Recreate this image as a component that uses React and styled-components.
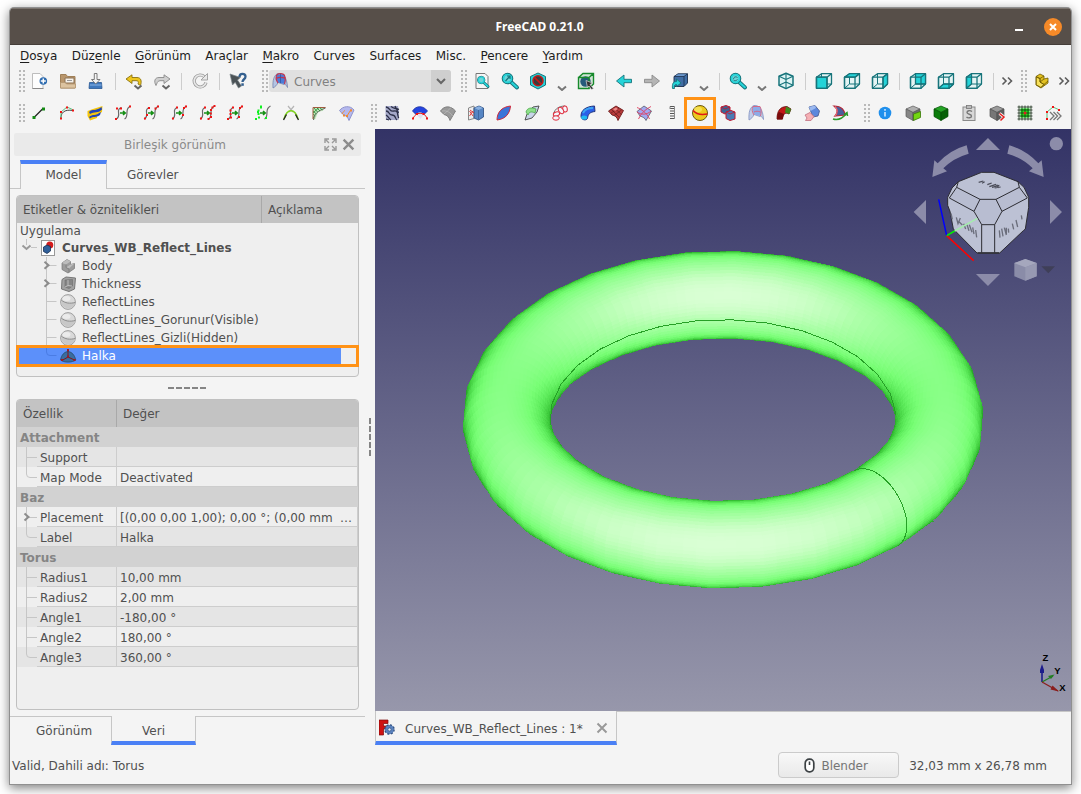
import React from 'react';
import styled, { createGlobalStyle } from 'styled-components';

const Global = createGlobalStyle`
  * { box-sizing: border-box; }
  html, body { margin: 0; padding: 0; background: #fff; }
  body { width: 1081px; height: 794px; overflow: hidden; font-family: "DejaVu Sans", sans-serif; font-size: 12px; color: #505050; }
  #root { width: 1081px; height: 794px; }
`;

/* ---------- window frame ---------- */
const Desktop = styled.div`
  width: 1081px; height: 794px; padding: 8px 10px 10px; overflow: hidden;
  display: flex; background: #fff;
`;
const Window = styled.div`
  width: 1061px; height: 776px; display: flex; flex-direction: column;
  background: #f4f4f4; border-radius: 4px 4px 0 0; overflow: hidden; white-space: nowrap;
  box-shadow: 0 0 0 1px #909090, 0 3px 11px 1px rgba(0,0,0,0.5);
`;
const TitleBar = styled.div`
  height: 37px; flex: none; display: flex; align-items: center; justify-content: flex-end;
  padding-right: 9px; gap: 21px; background: #574f49; border-top: 1px solid #7c756f; border-bottom: 1px solid #453e39;
`;
const Title = styled.div`
  flex: 1; text-align: center; padding-left: 75px; color: #fff;
  font: bold 12px "Noto Sans", sans-serif;
`;
const MinButton = styled.div`width: 8px; height: 2px; background: #fff; margin-top: 6px;`;
const CloseButton = styled.div`
  width: 18px; height: 18px; border-radius: 50%; background: #f68a28; display: flex; align-items: center; justify-content: center;
`;
const MenuBar = styled.div`
  height: 21px; flex: none; display: flex; gap: 14.35px; padding: 0 10px; line-height: 23px; color: #1c1c1c;
  u { text-underline-offset: 2px; text-decoration-thickness: 1px; }
`;

/* ---------- toolbars ---------- */
const Toolbar = styled.div`height: ${p => p.$h}px; flex: none; display: flex; align-items: center; padding-bottom: ${p => p.$pb || 0}px;`;
const Slot = styled.div`
  width: ${p => p.$w || 28}px; height: 30px; flex: none; display: flex; align-items: center; justify-content: center; position: relative;
  svg { display: block; }
`;
const Grip = styled.div`
  width: ${p => p.$w}px; flex: none; display: flex; justify-content: flex-end; padding-right: ${p => p.$pr || 2}px;
  &::after {
    content: ""; width: 8px; height: ${p => p.$h}px; position: relative; left: 1px;
    background: linear-gradient(90deg, #f4f4f4 2px, transparent 2px) 0 0 / 4px 4px, linear-gradient(#b9b9b9 2px, transparent 2px) 0 0 / 4px 4px;
  }
`;
const Divider = styled.div`width: 10px; flex: none; display: flex; justify-content: center; &::after { content: ""; width: 1px; height: 17px; background: #cdcdcd; }`;
const Highlight = styled.div`
  position: absolute; left: -2px; top: -1px; width: 32px; height: 32px; border: 3px solid #ff9216;
`;
const Combo = styled.div`
  width: 182px; height: 22px; flex: none; display: flex; align-items: center; background: #e0e0e0; border-radius: 3px; overflow: hidden; color: #808080;
  padding-left: 1px;
  span { flex: 1; padding: 1px 0 0 4px; }
`;
const ComboArrow = styled.div`width: 20px; height: 22px; background: #cfcfcf; display: flex; align-items: center; justify-content: center;`;

/* ---------- main area ---------- */
const Main = styled.div`height: 616px; flex: none; display: flex;`;
const Side = styled.div`width: 355px; flex: none; display: flex; flex-direction: column;`;
const DockTitle = styled.div`
  margin: 4px 4px 0 4px; height: 23px; display: flex; align-items: center; background: #eaeaea; color: #8a8a8a; border-radius: 2px; padding-right: 6px; gap: 5px;
  span { flex: 1; text-align: center; padding-left: 17px; }
`;
const TopTabs = styled.div`height: 29px; margin-top: 4px; display: flex;`;
const Rule = styled.div`width: ${p => p.$w}px; flex: ${p => (p.$grow ? 1 : 'none')}; border-${p => p.$side}: 1px solid #c6c6c6;`;
const Tab = styled.div`
  width: ${p => p.$w}px; flex: none; text-align: center;
  ${p => p.$top && `border: 1px solid #c6c6c6; border-bottom: 0; border-top: 4px solid #4a80f5; line-height: 22px;`}
  ${p => p.$bottom && `border: 1px solid #c6c6c6; border-top: 0; border-bottom: 4px solid #4a80f5; line-height: 31px;`}
`;
const IdleTab = styled.div`
  width: ${p => p.$w}px; flex: none; padding-left: ${p => p.$pad}px; line-height: ${p => p.$lh}px; border-${p => p.$side}: 1px solid #c6c6c6;
`;
const Panel = styled.div`
  width: 343px; height: ${p => p.$h}px; margin: ${p => p.$mt}px 0 0 6px; flex: none; border: 1px solid #c0c0c0; border-radius: 4px; background: #efefef;
`;
const Header = styled.div`height: 27px; display: flex; background: #c3c3c3; line-height: 29px; border-radius: 3px 3px 0 0;`;
const HeadCell = styled.div`width: ${p => p.$w}px; height: 27px; padding-left: 6px; flex: none; ${p => p.$line && 'border-right: 1px solid #a9a9a9;'}`;
const TreeCaption = styled.div`height: 16px; line-height: 17px; padding-left: 3px;`;
const TreeRow = styled.div`
  height: 18px; display: flex; align-items: center; position: relative; line-height: 17px;
  width: ${p => (p.$selected ? 324 : 341)}px;
  background: ${p => (p.$selected ? '#5c90fa' : 'transparent')};
  color: ${p => (p.$selected ? '#fff' : '#505050')};
  font-weight: ${p => (p.$bold ? 'bold' : 'normal')};
  svg { display: block; flex: none; }
`;
const Label = styled.span`padding-left: ${p => p.$pad}px;`;
const SelectionFrame = styled.div`
  position: absolute; left: -1px; top: -2px; width: 343px; height: 22px; border: 3px solid #ff9216;
`;
const HSplit = styled.div`
  height: 22px; display: flex; gap: 2px; justify-content: center; align-items: center; padding-right: 1px;
  i { width: 6px; height: 2px; background: #858585; }
`;
const VSplit = styled.div`
  width: 10px; flex: none; display: flex; flex-direction: column; gap: 2px; align-items: center; padding-top: 289px;
  i { width: 2px; height: 6px; background: #858585; flex: none; }
`;
const Group = styled.div`height: 20px; line-height: 23px; background: #d2d2d2; color: #858585; font-weight: bold; padding-left: 3px;`;
const Prop = styled.div`height: 20px; display: flex; line-height: 23px; background: ${p => (p.$alt ? '#efefef' : '#e5e5e5')}; svg { flex: none; }`;
const PropName = styled.div`width: 80px; height: 20px; flex: none; padding-left: 3px; border-bottom: 1px solid #cdcdcd; border-right: 1px solid #cdcdcd;`;
const PropValue = styled.div`flex: 1; height: 20px; display: flex; justify-content: space-between; padding: 0 5px 0 3px; border-bottom: 1px solid #cdcdcd; border-right: 1px solid #cdcdcd;`;
const BottomTabs = styled.div`height: 29px; margin-top: 6px; display: flex;`;

const Right = styled.div`flex: 1; display: flex; flex-direction: column; min-width: 0;`;
const Viewport = styled.div`
  height: 582px; flex: none; position: relative; overflow: hidden; background: linear-gradient(#333366, #9797ab);
`;
const Scene = styled.svg`display: block; width: 696px; height: 582px;`;
const DocTabs = styled.div`height: 34px; display: flex;`;
const DocTab = styled.div`
  width: 242px; flex: none; display: flex; align-items: center; padding: 0 8px 0 3px; border: 1px solid #c6c6c6; border-top: 0; border-bottom: 4px solid #4a80f5;
  span { padding-left: 10px; flex: 1; padding-top: 6px; }
  svg { margin-top: 3px; }
`;
const StatusBar = styled.div`flex: 1; display: flex; align-items: center; padding: 1px 24px 0 2px; line-height: 16px;`;
const StatusText = styled.div`flex: 1; padding-top: 1px;`;
const SizeText = styled.div`padding-top: 1px;`;
const NavButton = styled.div`
  width: 121px; height: 26px; display: flex; align-items: center; justify-content: center; gap: 6px; color: #757575; padding-right: 5px;
  border: 1px solid #cbcbcb; border-radius: 4px; background: linear-gradient(#f8f8f8, #e9e9e9); margin-right: 10px;
  span { padding-top: 1px; }
`;

/* ---------- icons (20 x 20 grid) ---------- */
const T = '#17747b', C = '#25d3d8';
const Cube = ({ face }) => (
  <g stroke={T} strokeLinejoin="round" strokeWidth="1.3" fill="none">
    <path d="M2.500 6.200L7.500 2.700H17.500V13L13 17.300H2.500Z" fill="#e4f4f4" />
    {face === 'back' && <path d="M7.500 2.700H17.500V13H7.500Z" fill={C} />}
    {face === 'bottom' && <path d="M2.500 17.300L7.500 13H17.500L13 17.300Z" fill={C} />}
    {face === 'left' && <path d="M2.500 6.200L7.500 2.700V13L2.500 17.300Z" fill={C} />}
    <path d="M7.500 2.700V13H17.500M7.500 13L2.500 17.300" strokeWidth="1" />
    {face === 'front' && <path d="M2.500 6.200H13V17.300H2.500Z" fill={C} />}
    {face === 'top' && <path d="M2.500 6.200L7.500 2.700H17.500L13 6.200Z" fill={C} />}
    {face === 'right' && <path d="M13 6.200L17.500 2.700V13L13 17.300Z" fill={C} />}
    <path d="M2.500 6.200H13V17.300H2.500ZM13 6.200L17.500 2.700" />
  </g>
);
const Solid = ({ top, left, right, stroke }) => (
  <g stroke={stroke} strokeLinejoin="round" strokeWidth=".7">
    <path d="M10 3L17 6L10 9.500L3 6Z" fill={top} />
    <path d="M3 6L10 9.500V17.500L3 13.500Z" fill={left} />
    <path d="M17 6L10 9.500V17.500L17 13.500Z" fill={right} />
  </g>
);
const Lens = ({ s = 1, x = 0, y = 0, children }) => (
  <g transform={`translate(${x} ${y}) scale(${s})`}>
    <path d="M11 11L17 16.500" stroke={T} strokeWidth="4" strokeLinecap="round" />
    <path d="M11 11L16.800 16.300" stroke={C} strokeWidth="2.200" strokeLinecap="round" />
    <circle cx="7.500" cy="7.500" r="5.200" fill="#6fd4d8" stroke={T} strokeWidth="1.200" />
    <circle cx="7.500" cy="7.500" r="3.900" fill="none" stroke={C} strokeWidth="1.800" />
    {children}
  </g>
);
const Link = ({ a, b }) => (
  <g fill="none">
    <path d="M3 16C6 15 6 12 5.500 9S7 5 8.500 4.500" stroke={a} strokeWidth="1.200" />
    <path d="M11.500 16C14 15 14 12 14 9S15.500 4 17.500 3" stroke={b} strokeWidth="1.200" />
    <path d="M7 10H12M10 8.200L12.200 10L10 11.800" stroke="#169016" strokeWidth="1.600" />
  </g>
);
const Dots = ({ pts, c = '#f01414' }) => <>{pts.map(([x, y], i) => <rect key={i} x={x - 1} y={y - 1} width="2" height="2" fill={c} />)}</>;
const gray = '#6a6a6a';
const L1 = [[3, 16], [6, 14.5], [5.5, 11], [5.5, 7.5], [8, 4.500]];
const R1 = [[11.5, 16], [14, 14], [13.800, 10.500], [14, 7], [15.500, 4.500], [17.500, 3]];

const ICONS = {
  fresh: <><path d="M2.500 2.500H10L13 5.500V17.500H2.500Z" fill="#fdfdfd" stroke="#b5b5b5" strokeWidth=".9" /><path d="M2.500 17.500H13.500" stroke="#888" /><circle cx="13.300" cy="10" r="3.800" fill="#2e6cb0" /><path d="M13.300 7.500V12.500M10.800 10H15.800" stroke="#fff" strokeWidth="1.500" /></>,
  open: <><path d="M2.500 3.500H8L9.500 5.500H17V17H2.500Z" fill="#b9966c" stroke="#a08058" /><path d="M7 7H16V12H7Z" fill="#f6f2ec" stroke="#8c7355" /><path d="M9 9.500H14" stroke="#999" /><path d="M2.500 11.500H7L8.500 13H17.500V17H2.500Z" fill="#dcc3a0" stroke="#b39670" strokeWidth=".8" /></>,
  save: <><path d="M3.500 11.500H15.500L16 17.500H3Z" fill="#3f78bd" stroke="#2a5893" strokeWidth=".8" /><path d="M4 14H15.500" stroke="#8cb4e4" /><path d="M8.300 2.500H11V8.500H14L9.700 13L5.500 8.500H8.300Z" fill="#f5f5f5" stroke="#6d6d6d" strokeWidth=".9" /></>,
  undo: <><path d="M2 8L8 3.800V6.500H13C17 6.500 18 10 16.500 14.500L14 13C15 10.500 14 9.700 12 9.700H8V12.500Z" fill="#edc51c" stroke="#8a7210" strokeWidth=".9" /><path d="M10.500 14.500L14 17.500L17.500 14.500" stroke="#666" strokeWidth="2" fill="none" /></>,
  redo: <><path d="M18 8L12 3.800V6.500H7C3 6.500 1.500 10 4 14.500C5 13 5 9.700 8 9.700H12V12.500Z" fill="#d0d0d0" stroke="#8a8a8a" strokeWidth=".9" /><path d="M10.500 14.500L14 17.500L17.500 14.500" stroke="#666" strokeWidth="2" fill="none" /></>,
  refresh: <><path d="M14.500 5.800A6 6 0 1 0 16 11.500" fill="none" stroke="#9c9c9c" strokeWidth="3.200" /><path d="M14.500 5.800A6 6 0 1 0 16 11.500" fill="none" stroke="#e8e8e8" strokeWidth="1.600" /><path d="M17.500 2.500V9H11Z" fill="#e8e8e8" stroke="#9c9c9c" strokeWidth=".9" /></>,
  help: <><path d="M2 3L12.500 6.500L9.500 9L13.500 15L10.500 17L7.200 11.300L4.500 14Z" fill="#4b5357" stroke="#7b8589" strokeWidth=".7" /><path d="M11.500 6C11.500 1.800 17.500 2 17.500 5.500C17.500 8.500 14.500 8 14.500 11" fill="none" stroke="#34608f" strokeWidth="2.300" /><rect x="13.300" y="12.300" width="2.500" height="2.500" fill="#34608f" /></>,
  wb: <><path d="M3 17C2.500 9 4 4 8 2.500C13 2 17 6 17.500 16.500C16 13.500 15 13 14 13.500L8 11.500C7 14 5 16 3 17Z" fill="#b4c4e4" stroke="#7383ac" strokeWidth=".8" /><path d="M7 3.500H14C15.500 6 15.500 10 14.500 13L8 11.500C6.500 9 6 6 7 3.500Z" fill="#4a7cd8" /><path d="M7 3.500C5.500 6 6 9 8 12M14 3.500C15.500 6 15.500 10 14.500 13M6 7.500C9 6 12 6 15.500 7.500M7 3.500C9 2.500 12 2.500 14 3.500" stroke="#c03550" strokeWidth="1.200" fill="none" /><path d="M10.500 3V12" stroke="#2f4f98" strokeWidth=".7" fill="none" /></>,
  fitAll: <><path d="M4 2.500H13L16 5.500V17.500H4Z" fill="#f6f6f6" stroke="#777" /><Lens s=".72" x="3.800" y="3.600" /></>,
  fitSel: <Lens><path d="M5.500 10L10 5M7 5H10V8" stroke={T} fill="none" strokeWidth="1.200" /></Lens>,
  noDraw: <><path d="M10 2L17.500 5.500V14L10 18L2.500 14V5.500Z" fill={C} stroke={T} /><circle cx="10" cy="9.800" r="5" fill="#3b3b3b" stroke="#c41818" strokeWidth="1.500" /><path d="M6.400 6.400L13.600 13.300" stroke="#c41818" strokeWidth="1.700" /></>,
  boxSel: <><path d="M2.500 6.500L7 2.500H17.500V13L13 17.500H2.500Z" fill="#cfe4d4" /><circle cx="9.500" cy="10.500" r="5.200" fill="#255a7b" /><path d="M2.500 6.500H13V17.500H2.500ZM2.500 6.500L7 2.500H17.500V13L13 17.500M13 6.500L17.500 2.500" fill="none" stroke="#178a2c" strokeWidth="1.400" /><path d="M10 9.500L16.500 12L14 13.500L17.500 17.500L15.500 18.500L13 15L11.500 16.500Z" fill="#333" stroke="#ddd" strokeWidth=".7" /></>,
  prev: <path d="M2.500 10L10 4V8.300H17.500V11.700H10V16Z" fill={C} stroke={T} strokeWidth=".9" />,
  next: <path d="M17.500 10L10 4V8.300H2.500V11.700H10V16Z" fill="#b5b5b5" stroke="#8a8a8a" strokeWidth=".9" />,
  linkGo: <><path d="M4 5.500L8 2.800H17.500V12L14 15.500H4Z" fill="#3f6da4" stroke="#1b2f4c" strokeWidth=".9" /><path d="M4.500 5.500L8 3.300H17L13.500 5.500Z" fill="#6d98cc" /><path d="M4 5.500H14V15M14 5.500L17.500 2.800" stroke="#1b2f4c" fill="none" strokeWidth=".8" /><path d="M2.500 17.500C2 13 3 10.500 6.500 10.500V8L11 12L6.500 15.500V13.500C4.500 13.500 4 15 4.500 17.500Z" fill={C} stroke={T} strokeWidth=".9" /></>,
  zoomV: <Lens><path d="M5.500 8C6 5.500 8 5.500 9.500 6.500M9.500 8.500C8 10 6.500 10 5.500 9" stroke={T} fill="none" /></Lens>,
  iso: <g stroke={T} fill="none" strokeLinejoin="round"><path d="M10 2.300L17 5.300V14.300L10 17.700L3 14.300V5.300Z" fill="#ddf4f4" strokeWidth="1.500" /><path d="M3 5.300L10 8.500L17 5.300M10 8.500V17.700M3 14.300L10 11L17 14.300M10 2.300V8" strokeWidth="1.100" /></g>,
  front: <Cube face="front" />, top: <Cube face="top" />, right: <Cube face="right" />,
  rear: <Cube face="back" />, bottom: <Cube face="bottom" />, left: <Cube face="left" />,
  part: <g stroke="#6e5a00" strokeWidth=".8" strokeLinejoin="round"><path d="M4 5.500L8 3L12 5L12 8L16 7L16 12L9 17L4 14Z" fill="#e3c120" /><path d="M4.300 6L8 7.700V11L12 13.500L9 16.500L4.300 13.800Z" fill="#f7e05a" /><path d="M4 5.500L8 7.500L12 5M8 7.500V11L12 13.500L16 10M8 11L12 8M12 13.500L9 16.500" fill="none" /></g>,

  line: <><path d="M5 14.500L14 5.500" stroke="#222" strokeWidth="1.300" /><rect x="3.500" y="13" width="3" height="3" fill="#148a14" /><rect x="13" y="4.500" width="3" height="3" fill="#148a14" /></>,
  bspline: <><path d="M4 16C3.500 10 7 6 16 7.500" stroke="#444" strokeWidth="1" fill="none" /><path d="M4 16V9L10 4L16.500 7" stroke="#5cbf7c" fill="none" /><Dots pts={[[4, 15.500], [4, 9], [10, 4.500], [16, 7.500]]} /></>,
  edit: <><path d="M2.500 8L8 6L17.500 3L17 9L12 12V15L5 17.500L2.500 13Z" fill="#f5c60c" /><path d="M4 9C8 5 10 9 16.500 4L17 6.500C13 11 9 8 5 11Z" fill="#2344b4" /><path d="M4 14C8 10.500 10 13.500 16 9L15 12C11 15 8 13 5 15.500Z" fill="#2344b4" /></>,
  j1: <><Link a={gray} b={gray} /><Dots pts={[[4, 5.500], [8, 5.500], [3, 16], [17, 3.500]]} /></>,
  j2: <><Link a={gray} b={gray} /><Dots pts={[[4, 15.500], [6, 12], [8, 5], [14.500, 5.500], [17, 3.500]]} /></>,
  j3: <><Link a={gray} b={gray} /><Dots pts={[[4, 15.500], [8, 4.500], [14, 12], [15, 5], [17, 3.500]]} /></>,
  j4: <><Link a={gray} b={gray} /><Dots pts={R1} /><Dots pts={[[4, 15.500], [8, 4.500]]} /></>,
  j5: <><Link a={gray} b={gray} /><Dots pts={L1} /><Dots pts={[[14, 14], [15, 5], [17, 3.500]]} /></>,
  j6: <><Link a="transparent" b={gray} /><Dots c="#10f020" pts={[...L1, [5, 9], [8, 3.500], [13, 15]]} /></>,
  blend: <><path d="M7 3L12 9M13 3L8 9" stroke="#b5b5b5" strokeWidth="1.200" /><path d="M3 16C6 5 14 5 17 16" stroke="#7fd41c" strokeWidth="1.600" fill="none" /><path d="M2.500 17L5.500 11.500M17.500 17L14.500 11.500" stroke="#222" strokeWidth="1.300" /></>,
  comb: <><path d="M4 4L16.500 4L14 7.500L9 9.500L6.500 16L4 17Z" fill="#c8e8c0" /><path d="M4.500 17C5 10.500 9 8 16.500 5" stroke="#555" fill="none" strokeWidth=".9" /><path d="M5 5L8.500 9M8 5L11 8M11 5L13.500 7M4 8L7.500 11M4 11L6.500 13M4 14L5.500 15M4 10L10 4.500" stroke="#1b8a30" strokeWidth=".8" /><path d="M4 16V4.500H16.500" stroke="#a05c40" fill="none" /></>,
  grid: <><path d="M2.500 7.500C6 3 13 2 17 7L12 17.500C11 14.500 9 12.500 6 11.500Z" fill="#b4b8ee" stroke="#9094cc" /><path d="M10 13L14 6.500M5 11C6 9 7 8 8 7.500" stroke="#f08a30" fill="none" strokeWidth="1" /><Dots c="#f08a30" pts={[[14, 7.500], [7, 12.500], [10, 13]]} /></>,
  zebra: <><path d="M3.500 3H16L17 9L16.500 17H4L3.500 10Z" fill="#a4a8c8" /><path d="M4 4C9 5 7 9 12 8S15 14 17 15M4 8C8 8 6 12 10 12S13 16 15 17M9 3.500C12 6 14 5 17 6.500M4 12C6 13 6 15 9 17M13 3L16.500 10M4 16L7 17" stroke="#2c3048" strokeWidth="1.300" fill="none" /></>,
  trim: <><path d="M2.500 8C6 2.500 13 2 17.500 8L14 11.500C11 8.500 8.500 8.500 6 11.500Z" fill="#2444e0" stroke="#1a2f9c" strokeWidth=".8" /><path d="M6 11C8 9 12 9 14 11L10.500 16Z" fill="#e0e0f0" /><path d="M3 15.500C6 8.500 14 8.500 17.500 15.500" stroke="#e02020" fill="none" strokeWidth="1" /><Dots pts={[[3, 15.500], [17, 15.500], [7, 11], [13.500, 11]]} /></>,
  graySurf: <><path d="M2.500 8C6 3 12 2 17.500 8L12 17.500C11 14 9 12 6 11.500Z" fill="#999" stroke="#808080" /><path d="M6 11C8 9 11 7 13 4.500M4 8C9 7 13 10 14.500 13" stroke="#bbb" strokeWidth=".7" fill="none" /></>,
  sketch: <><path d="M2.500 5L8 3V15.500L2.500 17Z" fill="#eee" stroke="#888" /><path d="M8 5L13 3L17.500 5V14L12.500 17L8 15Z" fill="#5686c4" stroke="#2a4a7c" strokeWidth=".8" /><path d="M8.500 5L13 3.300L17 5L12.500 7Z" fill="#8ab0e0" /><path d="M12.500 7V16.500" stroke="#2a4a7c" strokeWidth=".5" /><path d="M3.500 8L7 13M7 8L3.500 13M4 7L8 10" stroke="#e03030" fill="none" strokeWidth=".9" /></>,
  leaf: <path d="M3 17C3 10 7 4 16.500 3C16 10 12 16 3 17Z" fill="#3b74d8" stroke="#d02a3c" strokeWidth="1" />,
  flat: <><path d="M3 17L5 11L11 4L17 3L15 9L10 15Z" fill="#c8d4e8" stroke="#444" strokeWidth=".9" /><path d="M4 9C5 5 9 4 14 6L13 10C9 8 7 9 6 12Z" fill="#8ee08a" stroke="#49a846" strokeWidth=".8" /></>,
  pipeR: <g fill="#f4f4fa" stroke="#e03040" strokeWidth="1"><path d="M3.500 15C2.500 7 8 3 15 3" stroke="#777" fill="none" /><ellipse cx="15" cy="6" rx="2.300" ry="3" transform="rotate(-10 15 6)" /><ellipse cx="11" cy="7.500" rx="2.200" ry="3.500" transform="rotate(-35 11 7.500)" /><ellipse cx="6.500" cy="11" rx="3.200" ry="2" transform="rotate(-15 6.500 11)" /><ellipse cx="6" cy="15" rx="3.300" ry="2.200" /></g>,
  pipeB: <><path d="M3 13C3 7 8 3.500 16.500 3L17 8.500C12 9 10 11 9.500 15.500C8 18 3 17 3 13Z" fill="#2b5fe8" stroke="#22357c" /><path d="M5 10C7 6 11 5 15 5" stroke="#3ca4f4" strokeWidth="2" fill="none" /><ellipse cx="6.200" cy="14.500" rx="3" ry="2" fill="#20b8f0" /></>,
  redSurf: <><path d="M2.500 8L10 3L17.500 7.500L12 17.500C11 14 9 12.500 6 12Z" fill="#b83a3a" stroke="#6c1c1c" strokeWidth=".9" /><path d="M5 6L13 14M8 4.500L15.500 11.500M5 10L13 5M8 12.500L15.500 7" stroke="#5c1818" strokeWidth=".6" /><path d="M7 6L10 4.500L12 6L9 8Z" fill="#e88" /></>,
  mesh: <><path d="M3 8.500L10 3L17.500 8L12 17.500C11 15 9 14 6 13Z" fill="#a0a8f0" stroke="#667" strokeWidth=".9" /><path d="M3 4.500C7 6 13 10 15.500 16M17 3.500C12 6 7 10 4.500 16M3 9C7 12 13 12 17 8" stroke="#e04060" strokeWidth=".9" fill="none" /></>,
  spring: <><path d="M8 3.500H12.500M8 5.500H12.500M8 8H12.500M8 10.500H12.500M8 13H12.500M8 15.500H12.500" stroke="#555" strokeWidth="1.200" /><path d="M8 3.500V6M12.500 3.500V16" stroke="#888" /></>,
  ball: <><circle cx="10" cy="10" r="7.500" fill="#ecc91c" stroke="#6c5a10" /><ellipse cx="8" cy="6.500" rx="4" ry="2.800" fill="#fbe965" opacity=".7" /><path d="M3 7.500C6 11 12 12 17.300 11" stroke="#e01818" strokeWidth="1.500" fill="none" /></>,
  stack: <g stroke="#c01830" strokeWidth="1"><path d="M3 4L8 2.500L12 4V9L7 11L3 9Z" fill="#3c6494" /><path d="M8 9L13 7.500L17 9V16L12 17.500L8 15.500Z" fill="#4a7ab4" /><path d="M3 4L7 6L12 4M8 9L12 11L17 9" fill="none" strokeWidth=".8" /></g>,
  arch: <><path d="M3 17C2.500 9 4 4 8 2.500C13 2 17 6 17.500 16.500C16 13.500 15 13 14 13.500L8 11.500C7 14 5 16 3 17Z" fill="#c0cce8" stroke="#8090c0" strokeWidth=".8" /><path d="M7 3.500H14C15.500 6 15.500 10 14.500 13L8 11.500C6.500 9 6 6 7 3.500Z" fill="#8cabe8" /><path d="M7 3.500C5.500 6 6 9 8 12M14 3.500C15.500 6 15.500 10 14.500 13M7 3.500H14M8 9C10 8 12 8 14.500 9" stroke="#d8607c" fill="none" strokeWidth=".9" /></>,
  bend: <><path d="M3 16C3 8 6 3.500 13 3.500L17 6L15 11C11 9 9 11 8.500 16Z" fill="#c41818" stroke="#5c1010" strokeWidth=".8" /><path d="M3 16.500C3 13 4 10 5 9L10 11L8.500 16.500Z" fill="#7a0c0c" /><path d="M12 3.500L17 6L15.500 11L11 9.500Z" fill="#3d8c1e" /></>,
  eraser: <><path d="M7 4L13 2.500L17.500 8L16 13L11 14Z" fill="#5d88dc" stroke="#41558c" strokeWidth=".8" /><path d="M7 4L13 2.500L14 5L8.500 8Z" fill="#9ab8f0" /><path d="M3 12L8 9.500L12 13.500L9 17.500H3.500L5 15Z" fill="#f5b0b4" stroke="#c07080" strokeWidth=".8" /></>,
  sweep: <><path d="M4 3C12 3 15 8 15 12L5 13C8 10 8 6 4 3Z" fill="#4a5f9c" stroke="#b02838" strokeWidth="1.200" /><path d="M5 13C8 10 8 7 5 3.500" stroke="#e86a78" strokeWidth="1.200" fill="none" /><path d="M3 16C9 18 13 15 17 10M14 11.500L17 9.500L17.500 13" stroke="#2a9a2a" strokeWidth="1.500" fill="none" /></>,
  info: <><circle cx="10" cy="10" r="6.300" fill="#1f8fec" /><path d="M10 9V13.500M10 6V7.700" stroke="#cfe8ff" strokeWidth="1.600" /></>,
  cubeG: <><Solid top="#b0b0b0" left="#868686" right="#6c6c6c" stroke="#5a5a5a" /><path d="M10.500 11L17.500 8.500V14.500L10.500 17.500Z" fill="#72d612" stroke="#3c7c0a" strokeWidth=".8" /></>,
  cubeGreen: <Solid top="#24a424" left="#0a7c0a" right="#066006" stroke="#034c03" />,
  clip: <><rect x="4" y="4" width="12" height="13.500" fill="#d8d8d8" stroke="#8a8a8a" /><rect x="7.500" y="2.500" width="5" height="3" fill="#bbb" stroke="#777" strokeWidth=".8" /><path d="M13 8.500C11 7 8 7.500 8 9.500S12.500 11 12.500 13S9 15.500 7.500 14" stroke="#777" fill="none" strokeWidth="1.400" /></>,
  cubeRed: <><Solid top="#9a9a9a" left="#777" right="#5e5e5e" stroke="#505050" /><path d="M12.500 10.500L17 14L13.500 17.500" stroke="#f4f4f4" strokeWidth="3" fill="none" /><path d="M12.500 10.500L17 14L13.500 17.500" stroke="#e81c1c" strokeWidth="1.500" fill="none" /></>,
  net: <><rect x="4" y="4" width="12" height="12" fill="#e0f4e0" /><rect x="5.500" y="5.500" width="9" height="9" fill="#14f014" /><path d="M4 2.500V17.500M7 2.500V17.500M10 2.500V17.500M13 2.500V17.500M16 2.500V17.500M2.500 4H17.500M2.500 7H17.500M2.500 10H17.500M2.500 13H17.500M2.500 16H17.500" stroke="#1c301c" strokeWidth=".8" /><rect x="8.700" y="8.700" width="2.700" height="2.700" fill="#e02020" /></>,
  more: <><path d="M4 16V9L10 4L16.500 7" stroke="#5cbf7c" fill="none" /><Dots pts={[[4, 16], [4, 9], [10, 4], [16, 7]]} /><path d="M7 9L11 13L7 17M10.500 9L14.500 13L10.500 17M14 9L18 13L14 17" stroke="#777" strokeWidth="1.300" fill="none" /></>,
};
const Icon = ({ n, size = 20 }) => <svg width={size} height={size} viewBox="0 0 20 20">{ICONS[n]}</svg>;
const Drop = () => <svg width="12" height="20" viewBox="0 0 12 20"><path d="M2 15.500L6 19L10 15.500" stroke="#777" strokeWidth="2" fill="none" /></svg>;
const Double = () => <svg width="14" height="12" viewBox="0 0 14 12"><path d="M2.500 2.500L6 6L2.500 9.500M8 2.500L11.500 6L8 9.500" stroke="#5c5c5c" strokeWidth="1.600" fill="none" /></svg>;
const Cross = ({ s = 12, c = '#8c8c8c', w = 2 }) => <svg width={s} height={s} viewBox="0 0 12 12"><path d="M1.500 1.500L10.500 10.500M10.500 1.500L1.500 10.500" stroke={c} strokeWidth={w} /></svg>;
const buttons = names => names.split(' ').map(n => <Slot key={n}><Icon n={n} />{n === 'ball' && <Highlight />}</Slot>);

/* ---------- tree parts ---------- */
const TREE_ICONS = {
  body: <g stroke="#757575" strokeWidth=".7" strokeLinejoin="round"><path d="M2 5L7 1.500L10.500 3.500V6.500L14.500 5.500V10.500L8 15L2 11.500Z" fill="#9c9c9c" /><path d="M2 5L7 1.500L10.500 3.500L6 6.500ZM6 9.500L10.500 6.500L14.500 5.500L9 10.500Z" fill="#bdbdbd" stroke="none" /><path d="M6 6.500V9.500L9 11V14.500" fill="none" /></g>,
  thick: <><path d="M2 3.500L6 1L15.500 2L14.500 13L9 15.500L1.500 13Z" fill="#a2a2a2" stroke="#777" /><path d="M5 4L12.500 3.500V10L9 12.500L5 11Z" fill="#858585" stroke="#6c6c6c" strokeWidth=".6" /><path d="M8 4V9.500L12 10M5 11L8 9.500" stroke="#c4c4c4" fill="none" strokeWidth=".9" /></>,
  sphere: <><circle cx="8" cy="8" r="7.400" fill="#d9d9d9" stroke="#999" strokeWidth=".9" /><ellipse cx="6.500" cy="4.500" rx="4" ry="2.500" fill="#ebebeb" /><path d="M1.500 6.500C5 9.500 10 9.800 15 8.500L14.500 11C10 17 3 14 1.500 10Z" fill="#c8c8c8" /><path d="M1.200 6C5 9.300 10 9.800 15.200 8.500" stroke="#8c8c8c" fill="none" strokeWidth="1" /></>,
  attach: <><path d="M0.500 12C1.500 7 4 4 8 3.500C12 4 14.500 7 15.800 12C12 14.800 4 14.800 0.500 12Z" fill="#3a6d9f" stroke="#27486a" strokeWidth=".8" /><path d="M8 9V2M8 9L2 12.500M8 9L14.500 12" stroke="#7c1822" strokeWidth="1" /><Dots c="#a01825" pts={[[8, 2], [2, 12], [14.500, 12], [8, 8.500]]} /></>,
};
const Branch = ({ last, arrow, light }) => (
  <svg width="42" height="18" viewBox="0 0 42 18">
    <path d={last ? 'M29.500 0V5Q29.500 8.500 33 8.500H39.500' : `M29.500 0V18M${arrow ? 32 : 29.5} 8.500H39.500`} stroke={light ? '#4a7ce4' : '#c6c6c6'} fill="none" />
    {arrow && <path d="M27.500 4.700L31.500 8.200L27.500 11.700" stroke="#8c8c8c" strokeWidth="2" fill="none" />}
  </svg>
);
const Item = ({ icon, text, selected, last, arrow }) => (
  <TreeRow $selected={selected}>
    <Branch last={last} arrow={arrow} light={selected} />
    <svg width="18" height="16" viewBox="-1 0 18 16">{TREE_ICONS[icon]}</svg>
    <Label $pad={5}>{text}</Label>
    {selected && <SelectionFrame />}
  </TreeRow>
);
const Property = ({ name, value, alt, last, arrow, more }) => (
  <Prop $alt={alt}>
    <svg width="20" height="20" viewBox="0 0 20 20">
      <path d={last ? 'M9.500 0V7Q9.500 10.500 13 10.500H20' : 'M9.500 0V20M9.500 10.500H20'} stroke="#c6c6c6" fill="none" />
      {arrow && <path d="M7.500 6.500L11.500 10L7.500 13.500" stroke="#8c8c8c" strokeWidth="2" fill="none" />}
    </svg>
    <PropName>{name}</PropName>
    <PropValue><span>{value}</span>{more && <span>…</span>}</PropValue>
  </Prop>
);

/* ---------- torus, isometric projection ---------- */
const S2 = Math.SQRT1_2, S6 = 1 / Math.sqrt(6), S3 = 1 / Math.sqrt(3);
const SCALE = 21.66, CX = 348, CY = 290.7;
const project = ([x, y, z]) => [CX + SCALE * (x * S2 + y * S2), CY - SCALE * (-x * S6 + y * S6 + z * 2 * S6)];
const facing = ([x, y, z]) => (x - y + z) * S3;
const ringPoint = (u, v) => [(10 + 2 * Math.cos(v)) * Math.cos(u), (10 + 2 * Math.cos(v)) * Math.sin(u), 2 * Math.sin(v)];
const ringNormal = (u, v) => [Math.cos(v) * Math.cos(u), Math.cos(v) * Math.sin(u), Math.sin(v)];
const mix = (a, b, t) => a.map((q, i) => q + (b[i] - q) * t);
const RAMP = [[0, [38, 165, 38]], [0.14, [60, 200, 58]], [0.32, [94, 236, 92]], [0.46, [120, 254, 117]], [0.6, [140, 255, 138]], [0.8, [172, 255, 168]], [0.93, [203, 255, 198]], [1, [218, 255, 213]]];
const shade = k => {
  let i = 1;
  while (i < RAMP.length - 1 && RAMP[i][0] < k) i++;
  const [a, ca] = RAMP[i - 1], [b, cb] = RAMP[i];
  const t = Math.max(0, Math.min(1, (k - a) / (b - a)));
  return `rgb(${mix(ca, cb, t).map(Math.round).join(',')})`;
};
const buildTorus = () => {
  const N = 30, SUB = 4, M = 72, out = [];
  const at = (i, s, v) => {
    const a = (i / N) * 2 * Math.PI, b = ((i + 1) / N) * 2 * Math.PI, t = s / SUB;
    return { p: mix(ringPoint(a, v), ringPoint(b, v), t), n: mix(ringNormal(a, v), ringNormal(b, v), t) };
  };
  for (let i = 0; i < N; i++) for (let s = 0; s < SUB; s++) for (let j = 0; j < M; j++) {
    const v0 = (j / M) * 2 * Math.PI, v1 = ((j + 1) / M) * 2 * Math.PI;
    const q = [at(i, s, v0), at(i, s + 1, v0), at(i, s + 1, v1), at(i, s, v1)];
    const k = q.reduce((sum, c) => sum + facing(c.n), 0) / 4;
    if (k < -0.06) continue;
    const pts = q.map(c => project(c.p));
    out.push({ d: q.reduce((sum, c) => sum + facing(c.p), 0), c: shade(k), pts: pts.map(p => p.map(w => w.toFixed(1)).join(',')).join(' ') });
  }
  return out.sort((a, b) => a.d - b.d);
};
const FACETS = buildTorus();
const track = (from, to, steps, fn) => Array.from({ length: steps + 1 }, (_, i) => project(fn(from + ((to - from) * i) / steps)).map(w => w.toFixed(1)).join(',')).join(' ');
const RAD = Math.PI / 180;
const EQUATOR = track(48, 228, 15, a => ringPoint(a * RAD, Math.PI));
const SECTION = track(-44, 135, 30, a => ringPoint(0, a * RAD));

const TurnArrow = () => <path d="M200 52Q150 66 113 106L103 97L97 147L141 130L130 121Q160 90 206 77Z" />;
const NavCube = () => (
  <g transform="translate(525 -1) scale(.33333)">
    <g fill="#8c8ca9">
      <path d="M228 66H300L264 30ZM228 438H300L264 474ZM41 252L78 216V288ZM486 252L450 216V288Z" />
      <circle cx="469" cy="47" r="20" />
      <TurnArrow /><g transform="translate(528 0) scale(-1 1)"><TurnArrow /></g>
    </g>
    <path d="M245 133H282L354 161L372 178L386 208V238L376 303L370 308L298 376H232L160 303L150 250L143 232V208L156 180L175 161Z" fill="#bcc1d4" stroke="#2c2c32" strokeWidth="3" />
    <path d="M170 178L240 214H288L358 178L382 210L306 250L284 290H245L222 250L148 210Z" fill="#b8bdd1" />
    <path d="M170 178L240 214H288L358 178M354 161L358 178L382 210L306 250L284 290H245L222 250L148 210L170 178L175 161M240 214L222 250M288 214L306 250M245 290V374M284 290V374M232 374H298" fill="none" stroke="#2c2c32" strokeWidth="3" />
    <path d="M236 163L250 159M246 166L254 161M262 170L275 165M268 176L288 169M276 178L298 172M284 180L302 177M290 170L296 180" stroke="#4b4d59" strokeWidth="3.500" />
    <path d="M153 256L157 274M169 268L174 287L181 270M177 281L187 291M191 287L197 303M200 287L207 308M208 290L216 313M218 298L222 318M227 306L230 328M298 307L300 329M305 302L309 325M313 299L319 321M319 299V319M325 302L326 314M337 287L341 304M348 276L353 297M364 262L366 274" fill="none" stroke="#6b6e7c" strokeWidth="4" />
    <g fill="none" strokeWidth="4.500"><path d="M116 214L140 323" stroke="#0000ff" /><path d="M140 323L221 398" stroke="#ff0000" /><path d="M140 323L164 309" stroke="#00f000" /><path d="M164 309L232 271" stroke="#a5ecae" /></g>
    <path d="M376 393L410 405V445L376 458L343 445V405Z" fill="#8a8ca8" />
    <path d="M376 393L410 405L376 418L343 405Z" fill="#a5a7bd" /><path d="M376 418L410 405V445L376 458Z" fill="#9799b2" />
    <path d="M424 415H465L445 436Z" fill="#3f3f58" />
  </g>
);
const AxisTripod = () => (
  <g>
    <path d="M667 553V538" stroke="#1c1c8c" strokeWidth="1.600" /><path d="M665 541L667 535L669 541V544H665Z" fill="#1c1c8c" />
    <path d="M667 553L678 547" stroke="#237d23" strokeWidth="1.300" /><path d="M673 547L679.500 545.500L676 550Z" fill="#237d23" />
    <path d="M667 553L683 562" stroke="#8a1e1e" strokeWidth="1.300" /><path d="M677.500 556.500L684 562.500L675.500 560.500Z" fill="#8a1e1e" />
    <g fontFamily="Liberation Sans, sans-serif" fontWeight="bold" fontSize="9.5" fill="#000" textAnchor="middle">
      <text x="670.500" y="532">Z</text><text x="682.500" y="545">Y</text><text x="687.500" y="562">X</text>
    </g>
  </g>
);

const Menu = ({ a = '', k = '', b = '' }) => <span>{a}{k && <u>{k}</u>}{b}</span>;

export default function App() {
  return (
    <Desktop>
      <Global />
      <Window>
        <TitleBar>
          <Title>FreeCAD 0.21.0</Title>
          <MinButton />
          <CloseButton><Cross s={8} c="#fff" w={3} /></CloseButton>
        </TitleBar>
        <MenuBar>
          <Menu k="D" b="osya" /><Menu a="Düz" k="e" b="nle" /><Menu k="G" b="örünüm" /><Menu a="Araçlar" /><Menu k="M" b="akro" />
          <Menu a="Curves" /><Menu a="Surfaces" /><Menu a="Misc." /><Menu k="P" b="encere" /><Menu k="Y" b="ardım" />
        </MenuBar>
        <Toolbar $h={31} $pb={1}>
          <Grip $w={16} $h={22} />{buttons('fresh open save')}<Divider />{buttons('undo redo')}<Divider />{buttons('refresh')}<Divider />{buttons('help')}
          <Grip $w={17} $h={22} />
          <Combo><Icon n="wb" /><span>Curves</span><ComboArrow><svg width="12" height="12" viewBox="0 0 12 12"><path d="M2 4L6 8L10 4" stroke="#666" strokeWidth="2" fill="none" /></svg></ComboArrow></Combo>
          <Grip $w={17} $h={22} />{buttons('fitAll fitSel noDraw')}<Slot $w={20}><Drop /></Slot>{buttons('boxSel')}<Divider />
          {buttons('prev next linkGo')}<Slot $w={20}><Drop /></Slot><Divider />{buttons('zoomV')}<Slot $w={20}><Drop /></Slot>{buttons('iso')}<Divider />
          {buttons('front top right')}<Divider />{buttons('rear bottom left')}<Divider />
          <Slot $w={18}><Double /></Slot><Grip $w={12} $h={22} />{buttons('part')}<Slot $w={16}><Double /></Slot>
        </Toolbar>
        <Toolbar $h={32}>
          <Grip $w={15} $h={18} $pr={1} />{buttons('line bspline edit j1 j2 j3 j4 j5 j6 blend comb grid')}
          <Grip $w={17} $h={18} />{buttons('zebra trim graySurf sketch leaf flat pipeR pipeB redSurf mesh spring ball stack arch bend eraser sweep')}
          <Grip $w={17} $h={18} />{buttons('info cubeG cubeGreen clip cubeRed net more')}
        </Toolbar>
        <Main>
          <Side>
            <DockTitle>
              <span>Birleşik görünüm</span>
              <svg width="13" height="13" viewBox="0 0 13 13"><path d="M1 5V1H5M8 1H12V5M12 8V12H8M5 12H1V8M2 2L5 5M11 2L8 5M11 11L8 8M2 11L5 8" stroke="#999" strokeWidth="1.400" fill="none" /></svg>
              <Cross s={13} w={2.200} />
            </DockTitle>
            <TopTabs>
              <Rule $w={10} $side="bottom" /><Tab $w={87} $top>Model</Tab><IdleTab $w={258} $pad={20} $lh={30} $side="bottom">Görevler</IdleTab>
            </TopTabs>
            <Panel $h={182} $mt={6}>
              <Header><HeadCell $w={245} $line>Etiketler &amp; öznitelikleri</HeadCell><HeadCell $w={96}>Açıklama</HeadCell></Header>
              <TreeCaption>Uygulama</TreeCaption>
              <TreeRow $bold>
                <svg width="24" height="18" viewBox="0 0 24 18"><path d="M9.500 0V6M14 8.500H20" stroke="#c6c6c6" /><path d="M5.500 6.500L9.500 10L13.500 6.500" stroke="#999" strokeWidth="2" fill="none" /></svg>
                <svg width="14" height="16" viewBox="0 0 14 16"><rect x=".5" y=".5" width="13" height="15" fill="#fff" stroke="#999" /><circle cx="8.800" cy="5" r="3.500" fill="#d41c1c" /><path d="M2.500 7L6 5L9.500 6.500V11L6 13.500L2.500 11.500Z" fill="#2f5f9a" stroke="#162e50" strokeWidth=".8" /></svg>
                <Label $pad={7}>Curves_WB_Reflect_Lines</Label>
              </TreeRow>
              <Item icon="body" text="Body" arrow /><Item icon="thick" text="Thickness" arrow />
              <Item icon="sphere" text="ReflectLines" /><Item icon="sphere" text="ReflectLines_Gorunur(Visible)" /><Item icon="sphere" text="ReflectLines_Gizli(Hidden)" />
              <Item icon="attach" text="Halka" selected last />
            </Panel>
            <HSplit><i /><i /><i /><i /><i /></HSplit>
            <Panel $h={311} $mt={0}>
              <Header><HeadCell $w={100} $line>Özellik</HeadCell><HeadCell $w={241}>Değer</HeadCell></Header>
              <Group>Attachment</Group>
              <Property name="Support" /><Property name="Map Mode" value="Deactivated" alt last />
              <Group>Baz</Group>
              <Property name="Placement" value="[(0,00 0,00 1,00); 0,00 °; (0,00 mm" alt arrow more /><Property name="Label" value="Halka" last />
              <Group>Torus</Group>
              <Property name="Radius1" value="10,00 mm" /><Property name="Radius2" value="2,00 mm" alt />
              <Property name="Angle1" value="-180,00 °" /><Property name="Angle2" value="180,00 °" alt /><Property name="Angle3" value="360,00 °" last />
            </Panel>
            <BottomTabs>
              <IdleTab $w={101} $pad={26} $lh={29} $side="top">Görünüm</IdleTab><Tab $w={85} $bottom>Veri</Tab><Rule $w={169} $side="top" />
            </BottomTabs>
          </Side>
          <VSplit><i /><i /><i /><i /><i /></VSplit>
          <Right>
            <Viewport>
              <Scene viewBox="0 0 696 582">
                <g shapeRendering="crispEdges">
                  {FACETS.map((f, i) => <polygon key={i} points={f.pts} fill={f.c} stroke={f.c} strokeWidth=".6" />)}
                  <polyline points={EQUATOR} fill="none" stroke="#26a026" />
                  <polyline points={SECTION} fill="none" stroke="#26a026" />
                </g>
                <NavCube />
                <AxisTripod />
              </Scene>
            </Viewport>
            <DocTabs>
              <DocTab>
                <svg width="16" height="17" viewBox="0 0 16 17"><path d="M0 1H9V4.500H4.500V7H8V10H4.500V16H0Z" fill="#cf1212" stroke="#7c0808" strokeWidth=".7" /><circle cx="10.500" cy="10.500" r="4.500" fill="#5b82bd" stroke="#2f4f80" strokeWidth="1.600" strokeDasharray="2 1.530" /><circle cx="10.500" cy="10.500" r="4" fill="#5b82bd" /><circle cx="10.500" cy="10.500" r="1.600" fill="#e8eef8" stroke="#2f4f80" strokeWidth=".7" /></svg>
                <span>Curves_WB_Reflect_Lines : 1*</span>
                <Cross s={12} c="#999" />
              </DocTab>
              <Rule $w={100} $grow $side="top" />
            </DocTabs>
          </Right>
        </Main>
        <StatusBar>
          <StatusText>Valid, Dahili adı: Torus</StatusText>
          <NavButton>
            <svg width="11" height="15" viewBox="0 0 11 15"><rect x="1.200" y="1.200" width="8.600" height="12.600" rx="4" fill="#fff" stroke="#3c4144" strokeWidth="1.700" /><path d="M5.500 3.500V7" stroke="#3c4144" strokeWidth="1.600" /></svg>
            <span>Blender</span>
          </NavButton>
          <SizeText>32,03 mm x 26,78 mm</SizeText>
        </StatusBar>
      </Window>
    </Desktop>
  );
}
